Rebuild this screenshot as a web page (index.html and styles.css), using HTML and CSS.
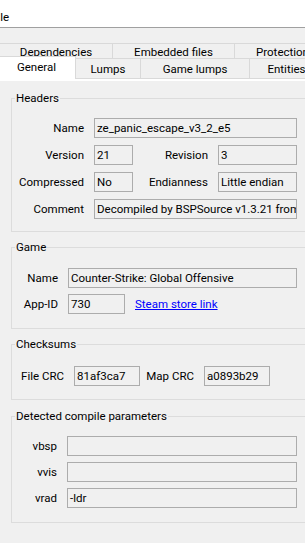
FILE: index.html
```html
<html>
  <head>
    <link rel="stylesheet" href="styles.css">
  </head>
  <body>

    <div class="menubar"><span class="menu-item">File</span></div>

    <div class="tabstrip">
      <div class="tabrow tabrow-back">
        <div class="tab tab-deps">Dependencies</div>
        <div class="tab tab-embedded">Embedded files</div>
        <div class="tab tab-protection">Protection</div>
      </div>
      <div class="tabrow tabrow-front">
        <div class="tab tab-general selected">General</div>
        <div class="tab tab-lumps">Lumps</div>
        <div class="tab tab-gamelumps">Game lumps</div>
        <div class="tab tab-entities">Entities</div>
      </div>
    </div>

    <div class="tabcontrol">
      <div class="tabpage">

        <div class="group group-headers">
          <div class="group-title">Headers</div>
          <div class="fields headers-grid">
            <div class="label">Name</div>
            <div class="textbox wide">ze_panic_escape_v3_2_e5</div>

            <div class="label">Version</div>
            <div class="textbox">21</div>
            <div class="label">Revision</div>
            <div class="textbox">3</div>

            <div class="label">Compressed</div>
            <div class="textbox">No</div>
            <div class="label">Endianness</div>
            <div class="textbox">Little endian</div>

            <div class="label">Comment</div>
            <div class="textbox wide">Decompiled by BSPSource v1.3.21 from ze_panic_escape_v3_2_e5</div>
          </div>
        </div>

        <div class="group group-game">
          <div class="group-title">Game</div>
          <div class="fields game-grid">
            <div class="label">Name</div>
            <div class="textbox wide">Counter-Strike: Global Offensive</div>

            <div class="label">App-ID</div>
            <div class="textbox">730</div>
            <a class="link" href="#">Steam store link</a>
          </div>
        </div>

        <div class="group group-checksums">
          <div class="group-title">Checksums</div>
          <div class="fields checksums-grid">
            <div class="label">File CRC</div>
            <div class="textbox">81af3ca7</div>
            <div class="label">Map CRC</div>
            <div class="textbox">a0893b29</div>
          </div>
        </div>

        <div class="group group-compile">
          <div class="group-title">Detected compile parameters</div>
          <div class="fields compile-grid">
            <div class="label">vbsp</div>
            <div class="textbox"></div>

            <div class="label">vvis</div>
            <div class="textbox"></div>

            <div class="label">vrad</div>
            <div class="textbox">-ldr</div>
          </div>
        </div>

      </div>
    </div>

  </body>
</html>
```

FILE: styles.css
```css
* {
  box-sizing: border-box;
}

body {
  margin: 0;
  width: 305px;
  height: 547px;
  overflow: hidden;
  background: #fff;
  font-family: Roboto, "Noto Sans", sans-serif;
  font-size: 11.5px;
  color: #000;
}

/* menu bar, cut off on the left */
.menubar {
  height: 28px;
  padding-top: 9px;
  line-height: 16px;
  white-space: nowrap;
  background: #fff;
  border-bottom: 1px solid #a0a0a0;
}
.menu-item {
  margin-left: -9px;
}

/* tabs */
.tabstrip {
  height: 50px;
  padding-top: 15px;
  background: #f0f0f0;
}
.tabrow {
  display: flex;
  height: 20px;
  white-space: nowrap;
}
.tabrow-front {
  margin-top: -5px;
  position: relative;
}
.tab {
  flex: none;
  height: 20px;
  text-align: center;
  background: #f0f0f0;
  border-top: 1px solid #d9d9d9;
  border-right: 1px solid #d9d9d9;
}
.tabrow-back .tab {
  line-height: 16px;
}
.tabrow-front .tab {
  padding-top: 2px;
  line-height: 17px;
}
.tab-deps { width: 113px; }
.tab-embedded { width: 122px; }
.tab-protection { width: 96px; }
.tab-general { width: 78px; margin-left: -2px; }
.tab-lumps { width: 65px; }
.tab-gamelumps { width: 109px; }
.tab-entities { width: 74px; }

.tab.selected {
  position: relative;
  z-index: 1;
  height: 23px;
  margin-top: -2px;
  padding-top: 2px;
  line-height: 16px;
  background: #fff;
}

.tabcontrol {
  width: 330px;
  padding: 2px 0 4px 0;
  background: #fff;
  border-top: 1px solid #d9d9d9;
}
.tabpage {
  display: flow-root;
  height: 462px;
  background: #f0f0f0;
}

/* group boxes */
.group {
  width: 300px;
  margin-left: 11px;
  border: 1px solid #dcdcdc;
}
.group-title {
  width: fit-content;
  margin: -8px 0 0 3px;
  padding: 0 1px;
  line-height: 15px;
  background: #f0f0f0;
  white-space: nowrap;
}
.group-headers { margin-top: 17px; padding-bottom: 12px; }
.group-game { margin-top: 15px; padding-bottom: 14px; }
.group-checksums { margin-top: 15px; padding-bottom: 13px; }
.group-compile { margin-top: 16px; padding-bottom: 14px; }

.fields {
  display: grid;
  grid-auto-rows: 20px;
  row-gap: 6px;
}
.headers-grid {
  grid-template-columns: 82px 39px 85px 79px;
  row-gap: 7px;
  margin-top: 12px;
}
.game-grid {
  grid-template-columns: 56px 57px 172px;
  margin-top: 13px;
}
.checksums-grid {
  grid-template-columns: 62px 66px 64px 66px;
  margin-top: 14px;
}
.compile-grid {
  grid-template-columns: 55px 230px;
  margin-top: 12px;
}
.headers-grid .wide { grid-column: 2 / 5; }
.game-grid .wide { grid-column: 2 / 4; }

.label {
  padding-right: 10px;
  line-height: 20px;
  text-align: right;
  white-space: nowrap;
}

.textbox {
  height: 20px;
  padding: 0 2px;
  line-height: 18px;
  white-space: nowrap;
  overflow: hidden;
  background: #f0f0f0;
  border: 1px solid #acacac;
}

.link {
  padding-left: 10px;
  line-height: 20px;
  color: #0000ff;
  text-decoration: underline;
  white-space: nowrap;
}
```
